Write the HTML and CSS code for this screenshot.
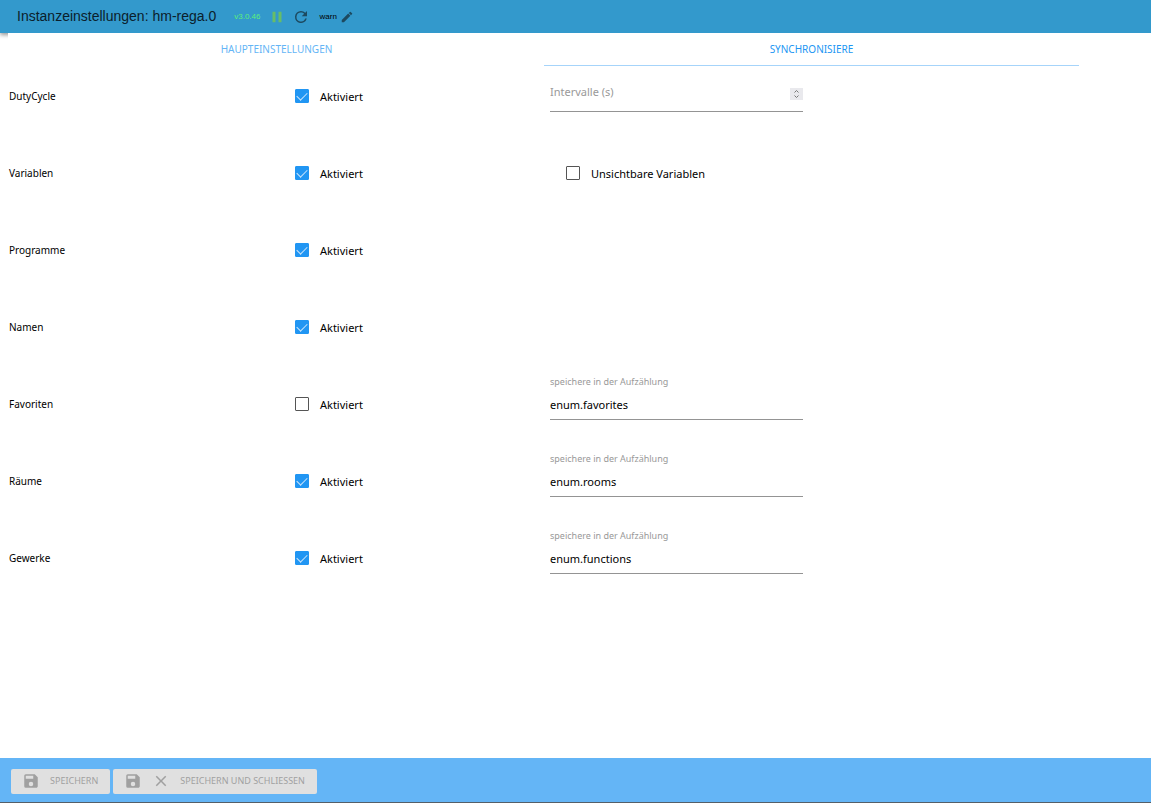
FILE: index.html
```
<!DOCTYPE html>
<html lang="de">
<head>
<meta charset="utf-8">
<title>Instanzeinstellungen: hm-rega.0</title>
<link rel="stylesheet" href="styles.css">
</head>
<body>
<svg class="symbols">
  <symbol id="save" viewBox="0 0 24 24"><path d="M17 3H5a2 2 0 0 0-2 2v14a2 2 0 0 0 2 2h14c1.100 0 2-.9 2-2V7l-4-4zm-5 16a3 3 0 1 1 0-6 3 3 0 0 1 0 6zm3-10H5V5h10v4z"/></symbol>
  <symbol id="close" viewBox="0 0 24 24"><path d="M19 6.410 17.590 5 12 10.590 6.410 5 5 6.410 10.590 12 5 17.590 6.410 19 12 13.410 17.590 19 19 17.590 13.410 12z"/></symbol>
</svg>
<header class="header">
  <h1 class="title">Instanzeinstellungen: hm-rega.0</h1>
  <span class="version">v3.0.46</span>
  <button class="icon-button pause" aria-label="Pause"><svg viewBox="0 0 24 24"><path d="M6 19h4V5H6v14zm8-14v14h4V5h-4z"/></svg></button>
  <button class="icon-button reload" aria-label="Neu starten"><svg viewBox="0 0 24 24"><path d="M17.650 6.350A7.958 7.958 0 0 0 12 4a8 8 0 1 0 7.730 10h-2.080A6 6 0 1 1 12 6c1.660 0 3.140.69 4.220 1.780L13 11h7V4l-2.350 2.350z"/></svg></button>
  <span class="level">warn</span>
  <button class="icon-button edit" aria-label="Bearbeiten"><svg viewBox="0 0 24 24"><path d="M3 17.250V21h3.750L17.810 9.940l-3.750-3.750L3 17.250zM20.710 7.040a1 1 0 0 0 0-1.410l-2.340-2.340a1 1 0 0 0-1.410 0l-1.830 1.830 3.750 3.750 1.830-1.830z"/></svg></button>
</header>
<main class="content">
  <nav class="tabs">
    <button class="tab">HAUPTEINSTELLUNGEN</button>
    <button class="tab active">SYNCHRONISIERE</button>
  </nav>
  <form class="settings" id="settings">
    <div class="row">
      <span class="name">DutyCycle</span>
      <label class="check"><input type="checkbox" checked>Aktiviert</label>
      <div class="field number">
        <input id="interval" type="text" inputmode="numeric" placeholder="Intervalle (s)" aria-label="Intervalle (s)">
        <svg class="spinner" viewBox="0 0 12 12" aria-hidden="true"><path d="M4 4.500 6 2.500l2 2M4 7.500l2 2 2-2"/></svg>
      </div>
    </div>
    <div class="row">
      <span class="name">Variablen</span>
      <label class="check"><input type="checkbox" checked>Aktiviert</label>
      <label class="check"><input type="checkbox">Unsichtbare Variablen</label>
    </div>
    <div class="row">
      <span class="name">Programme</span>
      <label class="check"><input type="checkbox" checked>Aktiviert</label>
    </div>
    <div class="row">
      <span class="name">Namen</span>
      <label class="check"><input type="checkbox" checked>Aktiviert</label>
    </div>
    <div class="row">
      <span class="name">Favoriten</span>
      <label class="check"><input type="checkbox">Aktiviert</label>
      <div class="field"><label for="favorites">speichere in der Aufzählung</label><input id="favorites" type="text" value="enum.favorites"></div>
    </div>
    <div class="row">
      <span class="name">Räume</span>
      <label class="check"><input type="checkbox" checked>Aktiviert</label>
      <div class="field"><label for="rooms">speichere in der Aufzählung</label><input id="rooms" type="text" value="enum.rooms"></div>
    </div>
    <div class="row">
      <span class="name">Gewerke</span>
      <label class="check"><input type="checkbox" checked>Aktiviert</label>
      <div class="field"><label for="functions">speichere in der Aufzählung</label><input id="functions" type="text" value="enum.functions"></div>
    </div>
  </form>
</main>
<footer class="footer">
  <button class="action" form="settings" disabled><svg><use href="#save"/></svg><span>SPEICHERN</span></button>
  <button class="action" form="settings" disabled><svg><use href="#save"/></svg><svg><use href="#close"/></svg><span>SPEICHERN UND SCHLIESSEN</span></button>
</footer>
</body>
</html>
```
FILE: styles.css
```
* { box-sizing: border-box; }

body {
  display: flex;
  flex-direction: column;
  min-height: 100vh;
  margin: 0;
  padding-bottom: 2px;
  background: #fff;
  color: #000;
  font: 11px/16px "Noto Sans", sans-serif;
}

button, input { font: inherit; }

.symbols { display: none; }

.header {
  display: flex;
  align-items: center;
  height: 33px;
  padding: 0 17px;
  background: #3399cc;
  box-shadow: 0 2px 4px rgba(0, 0, 0, .4);
  font-family: "Liberation Sans", Arial, sans-serif;
}

.title {
  margin: 0 18px 2px 0;
  color: #0b202b;
  font-size: 14px;
  font-weight: 400;
  white-space: nowrap;
}

.version { color: #5dee7b; font-size: 8px; }
.level { font-size: 8px; }

.icon-button {
  display: flex;
  padding: 0;
  border: 0;
  background: none;
}

.icon-button svg { width: 18px; height: 18px; fill: currentColor; }
.pause { margin-left: 8px; color: #67bd68; }
.reload { margin: 0 9px 0 6px; color: #1d4a60; }
.edit { margin-left: 3px; color: #1d4a60; }
.edit svg { width: 14px; height: 14px; }

.content {
  position: relative;
  flex: 1;
  margin-left: 8px;
  padding-right: 59px;
  background: #fff;
}

.tabs {
  display: grid;
  grid-template-columns: 1fr 1fr;
  margin: 0 13px 0 1px;
}

.tab {
  height: 33px;
  padding: 0;
  border: 0;
  border-bottom: 1px solid transparent;
  background: none;
  color: #64b5f6;
  font-size: 10px;
}

.tab.active { border-color: #a6d4fa; color: #2196f3; }

.row {
  display: grid;
  grid-template-columns: repeat(4, 1fr);
  height: 77px;
}

.name { padding: 22px 0 0 1px; font-size: 10px; }

.check {
  display: flex;
  gap: 11px;
  align-self: start;
  padding: 23px 0 0 16px;
}

.check input {
  flex: none;
  width: 14px;
  height: 14px;
  margin: 0;
  appearance: none;
  border: 1px solid #555;
  border-radius: 1px;
  background: #fff;
}

.check input:checked {
  display: grid;
  place-items: center;
  border-color: #2196f3;
  background: #2196f3;
}

.check input:checked::before {
  content: "";
  width: 9px;
  height: 5px;
  margin-bottom: 3px;
  border: solid #c8e4fc;
  border-width: 0 0 1px 1px;
  rotate: -45deg;
}

.field {
  display: flex;
  flex-direction: column;
  height: 46px;
  margin-right: 18px;
  border-bottom: 1px solid #949494;
}

.field label { color: #999; font-size: 9px; }

.field input {
  width: 100%;
  height: 28px;
  padding: 0;
  border: 0;
  outline: 0;
  background: none;
  color: #000;
}

.field input::placeholder { color: #999; opacity: 1; }

.number {
  flex-direction: row;
  align-items: center;
  padding-top: 6px;
}

.spinner {
  flex: none;
  width: 13px;
  height: 12px;
  margin-top: 4px;
  background: #e9e9ed;
  fill: none;
  stroke: #777;
}

.footer {
  display: flex;
  flex-wrap: wrap;
  gap: 3px;
  padding: 11px 11px 8px;
  border-bottom: 1px solid #555f68;
  background: #64b5f6;
}

.action {
  display: flex;
  align-items: center;
  height: 25px;
  padding: 0 12px 1px 11px;
  border: 0;
  border-radius: 2px;
  background: #e0e0e0;
  color: #a0a0a0;
  font-size: 9px;
}

.action svg { width: 18px; height: 18px; margin-right: 10px; fill: currentColor; }
```
